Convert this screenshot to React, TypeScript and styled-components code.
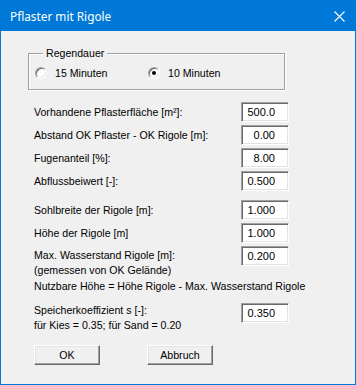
import React from 'react';
import styled, { createGlobalStyle } from 'styled-components';

const GlobalStyle = createGlobalStyle`
  html, body {
    margin: 0;
    padding: 0;
    background: #ffffff;
  }
`;

const Window = styled.div`
  box-sizing: border-box;
  width: 356px;
  height: 385px;
  border: 1px solid #0078d7;
  background: #f0f0f0;
  display: flex;
  flex-direction: column;
  font-family: "Liberation Sans", Arial, sans-serif;
  font-size: 10.6px;
  color: #000;
`;

const TitleBar = styled.div`
  height: 30px;
  background: #0078d7;
  display: flex;
  align-items: center;
  justify-content: space-between;
  padding: 0 10px 0 9px;
  color: #fff;
  font-family: "Noto Sans", "Open Sans", sans-serif;
  font-size: 11.8px;
`;

const Body = styled.div`
  flex: 1;
  display: flex;
  flex-direction: column;
  padding-left: 27px;
`;

const Group = styled.fieldset`
  box-sizing: border-box;
  width: 257px;
  margin: 16px 0 0 0;
  padding: 7px 6px 10px 6px;
  border: 1px solid #a0a0a0;
  box-shadow: inset 1px 1px 0 #fff, 1px 1px 0 #fff;
`;

const Legend = styled.legend`
  margin-left: 8px;
  padding: 0 3px;
  line-height: 13px;
  background: #f0f0f0;
`;

const RadioRow = styled.div`
  display: flex;
  height: 12px;
  align-items: center;
`;

const RadioItem = styled.label<{ $width?: number }>`
  display: flex;
  align-items: center;
  gap: 8px;
  width: ${(p) => p.$width ?? 113}px;
  line-height: 12px;
`;

const RadioCircle = styled.span<{ $checked?: boolean }>`
  box-sizing: border-box;
  width: 12px;
  height: 12px;
  border-radius: 50%;
  border: 1px solid;
  border-color: #a0a0a0 #ffffff #ffffff #a0a0a0;
  box-shadow: inset 1px 1px 0 #696969, inset -1px -1px 0 #e3e3e3;
  background: #fff;
  display: flex;
  align-items: center;
  justify-content: center;

  &::after {
    content: '';
    width: 4px;
    height: 4px;
    border-radius: 50%;
    background: #000;
    display: ${(p) => (p.$checked ? 'block' : 'none')};
  }
`;

const Form = styled.div`
  display: flex;
  flex-direction: column;
  gap: 3px;
  width: 255px;
  margin: 12px 0 0 6px;
`;

const Row = styled.div<{ $multi?: boolean; $space?: number }>`
  display: flex;
  justify-content: space-between;
  align-items: ${(p) => (p.$multi ? 'flex-start' : 'center')};
  margin-top: ${(p) => p.$space ?? 0}px;
`;

const Label = styled.div<{ $pad?: number }>`
  line-height: 15px;
  padding-top: ${(p) => p.$pad ?? 0}px;
`;

const Note = styled.div`
  line-height: 15px;
  margin-top: -2px;
  white-space: nowrap;
`;

const Edit = styled.input`
  box-sizing: border-box;
  width: 48px;
  height: 20px;
  margin: 0;
  padding: 0 13px 0 2px;
  border: 1px solid;
  border-color: #a0a0a0 #ffffff #ffffff #a0a0a0;
  box-shadow: inset 1px 1px 0 #696969, inset -1px -1px 0 #e3e3e3;
  background: #fff;
  font-family: "Liberation Sans", Arial, sans-serif;
  font-size: 11px;
  color: #000;
  text-align: right;
  outline: none;
`;

const ButtonRow = styled.div`
  display: flex;
  gap: 47px;
  margin: 12px 0 0 6px;
`;

const Button = styled.button`
  box-sizing: border-box;
  width: 66px;
  height: 20px;
  margin: 0;
  padding: 0;
  border: 1px solid;
  border-color: #ffffff #696969 #696969 #ffffff;
  box-shadow: inset -1px -1px 0 #a0a0a0, inset 1px 1px 0 #e3e3e3;
  background: #f0f0f0;
  font-family: "Liberation Sans", Arial, sans-serif;
  font-size: 10.6px;
  color: #000;
`;

const CloseIcon = () => (
  <svg width="11" height="11" viewBox="0 0 11 11">
    <path d="M0.5 0.5 L10.5 10.5 M10.5 0.5 L0.5 10.5" stroke="#fff" strokeWidth="1.1" />
  </svg>
);

type Field = { label: string[]; value: string; space?: number; pad?: number };

const fields: Field[] = [
  { label: ['Vorhandene Pflasterfläche [m²]:'], value: '500.0' },
  { label: ['Abstand OK Pflaster - OK Rigole [m]:'], value: '0.00' },
  { label: ['Fugenanteil [%]:'], value: '8.00' },
  { label: ['Abflussbeiwert [-]:'], value: '0.500' },
  { label: ['Sohlbreite der Rigole [m]:'], value: '1.000', space: 6 },
  { label: ['Höhe der Rigole [m]'], value: '1.000' },
  { label: ['Max. Wasserstand Rigole [m]:', '(gemessen von OK Gelände)'], value: '0.200', pad: 2 },
];

export default function App() {
  return (
    <>
      <GlobalStyle />
      <Window>
        <TitleBar>
          <span>Pflaster mit Rigole</span>
          <CloseIcon />
        </TitleBar>
        <Body>
          <Group>
            <Legend>Regendauer</Legend>
            <RadioRow>
              <RadioItem>
                <RadioCircle />
                15 Minuten
              </RadioItem>
              <RadioItem>
                <RadioCircle $checked />
                10 Minuten
              </RadioItem>
            </RadioRow>
          </Group>

          <Form>
            {fields.map((f) => (
              <Row key={f.label[0]} $multi={f.label.length > 1} $space={f.space}>
                <Label $pad={f.pad}>
                  {f.label.map((l) => (
                    <div key={l}>{l}</div>
                  ))}
                </Label>
                <Edit readOnly value={f.value} />
              </Row>
            ))}
            <Note>Nutzbare Höhe = Höhe Rigole - Max. Wasserstand Rigole</Note>
            <Row $multi $space={6}>
              <Label>
                <div>Speicherkoeffizient s [-]:</div>
                <div>für Kies = 0.35; für Sand = 0.20</div>
              </Label>
              <Edit readOnly value="0.350" />
            </Row>
          </Form>

          <ButtonRow>
            <Button>OK</Button>
            <Button>Abbruch</Button>
          </ButtonRow>
        </Body>
      </Window>
    </>
  );
}
